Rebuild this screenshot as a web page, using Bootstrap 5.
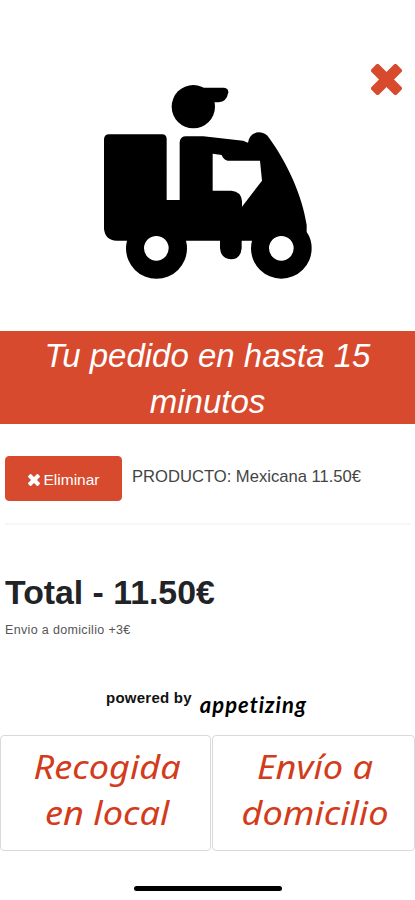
<!DOCTYPE html>
<html lang="es">
<head>
<meta charset="utf-8">
<meta name="viewport" content="width=device-width, initial-scale=1">
<title>Tu pedido</title>
<link href="https://cdn.jsdelivr.net/npm/bootstrap@5.3.0/dist/css/bootstrap.min.css" rel="stylesheet">
<style>
body{font-family:"Liberation Sans",Arial,sans-serif;color:#212326;width:415px;height:900px;overflow:hidden}
.hero{height:331px;padding:64px 13px 0 90px}
.rider{width:240px;height:220px;margin-top:6px}
.close-x{width:31px;height:31px;color:#d74a2e}
.banner{height:93px;background:#d74a2e;font-size:33px;line-height:46px;padding:2px 40px 0;font-style:italic}
.cart{height:100px;padding:32px 5px 0;gap:10px}
.btn-del{--bs-btn-bg:#d74a2e;--bs-btn-color:#fff;--bs-btn-border-color:#d74a2e;--bs-btn-hover-bg:#c13f25;--bs-btn-hover-color:#fff;width:117px;height:45px;font-size:15.5px;border-radius:4px;padding:3px 0 0;gap:4px}
.product{font-size:16.6px;color:#444;padding-top:9px;line-height:24px}
.rule{height:2px;background:#f7f7f7;margin:-1px 4px 0 5px}
.total{font-size:33.8px;line-height:40px;margin:47px 0 0 5px}
.note{font-size:12.5px;letter-spacing:.34px;line-height:16px;color:#555;margin:10px 0 0 5px}
.powered{height:97px;padding:51px 0 0 106px;gap:8px;color:#111}
.powered strong{font-size:15px;letter-spacing:.25px;line-height:18px}
.brandword{font-family:Lato,sans-serif;font-style:italic;font-weight:700;font-size:22px;letter-spacing:1px;line-height:32px;color:#000}
.choices{gap:1px}
.choice{--bs-btn-color:#d23c1b;--bs-btn-border-color:#d9d9d9;--bs-btn-bg:#fff;--bs-btn-hover-bg:#f8f8f8;--bs-btn-hover-color:#d23c1b;--bs-btn-hover-border-color:#ccc;height:116px;border-width:1px;border-radius:4px;padding:0 0 6px 3px;font-family:"Noto Sans",sans-serif;font-style:italic;font-size:32px;line-height:46px}
.choice-first{width:211px}
.choice span{display:inline-block;transform:scaleX(1.13)}
.home-bar{width:148px;height:5px;border-radius:3px;background:#000;margin:35px 0 0 134px}
</style>
<script src="https://cdn.jsdelivr.net/npm/bootstrap@5.3.0/dist/js/bootstrap.bundle.min.js"></script>
</head>
<body class="bg-white">
<svg class="d-none"><symbol id="cross" viewBox="0 0 32 32"><g fill="currentColor"><rect x="-2.500" y="10.500" width="37" height="11" rx="2.500" transform="rotate(45 16 16)"/><rect x="-2.500" y="10.500" width="37" height="11" rx="2.500" transform="rotate(-45 16 16)"/></g></symbol></svg>
<header class="hero d-flex justify-content-between align-items-start">
<svg class="rider" viewBox="0 0 720 660" aria-label="Repartidor">
<circle cx="310" cy="110" r="65"/>
<path d="M322 53H402Q415 54 415 67Q410 96 386 97H360Z"/>
<path fill-rule="evenodd" d="M57 193H216Q230 193 230 207V390H269V216Q271 199 288 199H340L459 212L474 218Q479 188 508 187Q526 188 537 203C590 276 637 375 650 465V486Q665 507 665 535A91 91 0 0 1 483 535Q483 522 486 512H455V535Q452 567 423 568Q392 565 390 535V512H288Q291 523 291 535A91 91 0 0 1 108 535Q108 523 111 512H80Q45 510 42 476V207Q43 193 57 193ZM368 251V362H424Q454 364 456 394V410L516 332L510 272H413Q400 269 395 255ZM236 535A37 37 0 1 0 162 535A37 37 0 1 0 236 535ZM611 535A37 37 0 1 0 537 535A37 37 0 1 0 611 535Z"/>
</svg>
<svg class="close-x" aria-label="Cerrar"><use href="#cross"/></svg>
</header>
<section class="banner text-white text-center">Tu pedido en hasta 15 minutos</section>
<section class="cart d-flex align-items-start">
<button class="btn btn-del d-flex align-items-center justify-content-center"><svg width="12" height="12"><use href="#cross"/></svg>Eliminar</button>
<div class="product text-nowrap">PRODUCTO: Mexicana 11.50€</div>
</section>
<div class="rule"></div>
<h1 class="total fw-bold">Total - 11.50€</h1>
<p class="note mb-0">Envio a domicilio +3€</p>
<div class="powered d-flex align-items-start text-nowrap"><strong>powered by</strong><span class="brandword">appetizing</span></div>
<div class="choices d-flex">
<button class="btn choice choice-first flex-shrink-0"><span>Recogida<br>en local</span></button>
<button class="btn choice flex-grow-1"><span>Envío a<br>domicilio</span></button>
</div>
<div class="home-bar"></div>
</body>
</html>
